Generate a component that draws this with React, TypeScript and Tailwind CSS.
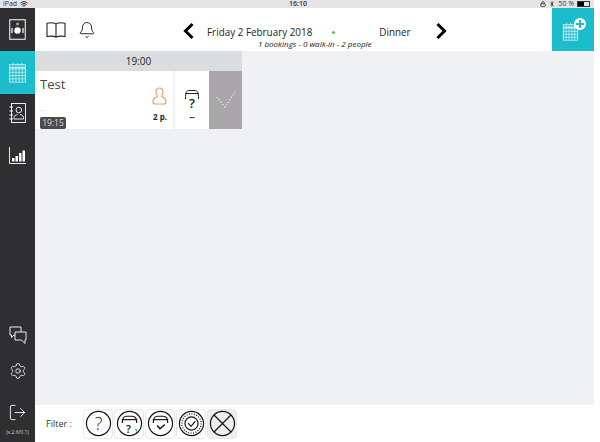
import React from 'react';
import { Bell, Settings, LogOut, Wifi, Bluetooth, Lock } from 'lucide-react';

const sans = { fontFamily: '"Open Sans", sans-serif' };

// --- Icons ---

const CalendarIcon: React.FC<{ className?: string }> = ({ className }) => {
    const lines = [];
    for (let i = 0; i < 6; i++) lines.push(<path key={`v${i}`} d={`M${3 + i * 3.6} 4V24`} />);
    for (let i = 0; i < 4; i++) lines.push(<path key={`h${i}`} d={`M3 ${9 + i * 3.75}H21`} />);
    return (
        <svg className={className} viewBox="0 0 24 26" fill="none" stroke="currentColor" strokeWidth="0.9">
            <rect x="3" y="4" width="18" height="20" />
            <path d="M3 7.5H21" strokeWidth="1.6" />
            <path d="M7 2V5M12 2V5M17 2V5" />
            {lines}
        </svg>
    );
};

const Chevron: React.FC<{ right?: boolean }> = ({ right }) => (
    <svg className="w-[28px] h-[28px] text-black mt-[3px] shrink-0" viewBox="0 0 28 28" fill="none" stroke="currentColor" strokeWidth="3">
        <path d={right ? 'M10.500 7L17.500 14L10.500 21' : 'M17.500 7L10.500 14L17.500 21'} />
    </svg>
);

const TableBase: React.FC = () => (
    <>
        <path d="M6.5 13.5C6.5 8 8 6.5 11 6.5H17C20 6.5 21.5 8 21.5 13.5" />
        <path d="M6 10H22" />
    </>
);

const FilterButton: React.FC<{ active?: boolean; children: React.ReactNode }> = ({ active, children }) => (
    <div className={`w-[30px] h-[30px] rounded-sm border border-[#e8e8ea] flex items-center justify-center ${active ? 'bg-[#eeeeef]' : 'bg-white'}`}>
        <svg className="w-[27px] h-[27px] text-[#111]" viewBox="0 0 28 28" fill="none" stroke="currentColor" strokeWidth="1.2">
            {children}
        </svg>
    </div>
);

const Sidebar: React.FC = () => (
    <div className="w-[35px] bg-[#2f2e30] flex flex-col text-white shrink-0">
        <div className="h-[43px] flex items-center justify-center">
            <svg className="w-[17px] h-[21px]" viewBox="0 0 17 21" fill="none" stroke="currentColor">
                <rect x="0.75" y="0.75" width="15.5" height="19.5" strokeWidth="1" />
                <circle cx="8.5" cy="5" r="1" strokeWidth="0.7" />
                <circle cx="8.5" cy="11.5" r="3.2" fill="currentColor" stroke="none" />
                <path d="M3 9V14M14 9V14" strokeWidth="1.2" />
            </svg>
        </div>
        <div className="h-[43px] bg-[#1dbccd] flex items-center justify-center">
            <CalendarIcon className="w-[21px] h-[23px] text-[#c9f1f5]" />
        </div>
        <div className="h-[38px] flex items-center justify-center">
            <svg className="w-[17px] h-[20px]" viewBox="0 0 17 20" fill="none" stroke="currentColor" strokeWidth="0.9">
                <rect x="2.5" y="0.5" width="14" height="19" />
                <circle cx="9.8" cy="7" r="2.8" />
                <path d="M5 16V14.5C5 12.5 7 12 8.5 11.5M14.5 16V14.5C14.5 12.5 12.5 12 11 11.5M5 16H14.5" />
                <path d="M0.5 4H4M0.5 8H4M0.5 12H4M0.5 16H4" strokeWidth="1.1" />
            </svg>
        </div>
        <div className="h-[46px] flex items-center justify-center">
            <svg className="w-[17px] h-[17px]" viewBox="0 0 17 17">
                <path d="M0.5 0V16.5H17" fill="none" stroke="currentColor" strokeWidth="0.9" />
                <path d="M3 11H5.5V14.5H3ZM6.5 9H9V14.5H6.5ZM10 6H12.5V14.5H10ZM13.5 3.5H16V14.5H13.5Z" fill="currentColor" />
            </svg>
        </div>
        <div className="flex-1" />
        <div className="flex flex-col items-center">
            <svg className="w-[18px] h-[18px] mb-[18px]" viewBox="0 0 18 18" fill="none" stroke="currentColor" strokeWidth="0.9">
                <path d="M1 1H12V9H5L2.5 11.5V9H1Z" />
                <path d="M6 6H17V14H16V17.5L12.5 14H6Z" fill="#2f2e30" />
            </svg>
            <Settings className="w-[18px] h-[18px] mb-[23px]" strokeWidth={1.1} />
            <LogOut className="w-[19px] h-[19px] mb-[7px]" strokeWidth={1.1} />
            <span className="text-[5px] leading-[6px] mb-[7px] text-[#ddd]" style={sans}>(v.2.6/0.1)</span>
        </div>
    </div>
);

const Header: React.FC = () => (
    <div className="h-[43px] bg-white flex items-center shrink-0">
        <svg className="w-[20px] h-[16px] ml-[11px] text-[#222] shrink-0" viewBox="0 0 20 16" fill="none" stroke="currentColor" strokeWidth="1.1">
            <path d="M10 2C8 0.800 3 0.800 1 1.200V14.500C3 14.200 8 14.200 10 15C12 14.200 17 14.200 19 14.500V1.200C17 0.800 12 0.800 10 2ZM10 2V15" />
        </svg>
        <Bell className="w-[18px] h-[18px] ml-[12px] text-[#111] shrink-0" strokeWidth={1.2} />
        <div className="ml-[79px]"><Chevron /></div>
        <div className="w-[224px] self-start mt-[17px] flex flex-col items-start">
            <div className="flex items-center text-[9.9px] leading-[14px] text-[#222] ml-[4px]">
                <span>Friday 2 February 2018</span>
                <span className="w-[3px] h-[3px] rounded-full bg-[#4cc84c] ml-[20px]" />
                <span className="ml-[44px]">Dinner</span>
            </div>
            <div className="text-[8px] leading-[9px] italic text-[#222] ml-[55px]">1 bookings - 0 walk-in - 2 people</div>
        </div>
        <Chevron right />
        <div className="flex-1" />
        <div className="w-[42px] h-[43px] bg-[#1dbccd] flex items-center justify-center relative">
            <CalendarIcon className="w-[19px] h-[21px] text-[#d5f4f7] mt-[4px] -ml-[5px]" />
            <div className="absolute top-[10px] right-[8px] w-[12px] h-[12px] rounded-full bg-white flex items-center justify-center">
                <svg className="w-[8px] h-[8px] text-[#1dbccd]" viewBox="0 0 8 8" stroke="currentColor" strokeWidth="2">
                    <path d="M4 0V8M0 4H8" />
                </svg>
            </div>
        </div>
    </div>
);

const Booking: React.FC = () => (
    <div className="w-[207px]">
        <div className="h-[20px] bg-[#d9dde0] flex items-center justify-center text-[10px] text-[#222]">19:00</div>
        <div className="h-[58px] flex">
            <div className="w-[138px] bg-white relative">
                <div className="absolute left-[5px] top-[4px] text-[13px] leading-[18px] text-[#444]">Test</div>
                <div className="absolute left-[5px] top-[35px] text-[6px] leading-[6px] text-[#aaa]">...</div>
                <div className="absolute left-[5px] bottom-[0px] w-[26px] h-[12px] rounded-[2px] bg-[#4a4a4c] text-[#ddd] text-[8.5px] leading-[12px] text-center">19:15</div>
                <svg className="absolute left-[117px] top-[16px] w-[15px] h-[18px] text-[#e0a26c]" viewBox="0 0 15 18" fill="none" stroke="currentColor" strokeWidth="1.2">
                    <path d="M7.5 1C5 1 4 3 4 5C4 7 5 8.5 5.5 9.5C3 10.5 1 11.5 1 14.5C1 16 2 17 3 17H12C13 17 14 16 14 14.5C14 11.5 12 10.5 9.500 9.500C10 8.500 11 7 11 5C11 3 10 1 7.500 1Z" />
                </svg>
                <div className="absolute right-[6px] top-[40px] text-[8px] leading-[11px] font-bold text-[#222]">2 p.</div>
            </div>
            <div className="w-[34px] ml-[2px] bg-white flex flex-col items-center">
                <svg className="w-[16px] h-[12px] mt-[18px] text-[#222]" viewBox="0 0 16 12" fill="none" stroke="currentColor" strokeWidth="1">
                    <path d="M1.500 10C1.500 3 3 1.500 5 1.500H11C13 1.500 14.500 3 14.500 10" />
                    <path d="M1 4.500H15" />
                </svg>
                <div className="text-[13px] leading-[12px] font-semibold text-[#222] -mt-[4px]">?</div>
                <div className="text-[8px] leading-[8px] font-bold text-[#222] mt-[4px]">--</div>
            </div>
            <div className="w-[33px] bg-[#a9a7a9] flex items-center justify-center">
                <svg className="w-[20px] h-[18px] text-white" viewBox="0 0 20 18" fill="none" stroke="currentColor" strokeWidth="1.200" strokeDasharray="1 2">
                    <path d="M1 6L9 16L19 1" />
                </svg>
            </div>
        </div>
    </div>
);

const Footer: React.FC = () => (
    <div className="h-[37px] bg-white flex items-center shrink-0">
        <span className="text-[9px] text-[#333] ml-[11px] w-[37px] mt-[1px]">Filter :</span>
        <div className="flex gap-[1px]">
            <FilterButton>
                <circle cx="14" cy="14" r="12.500" />
                <text x="14" y="20.500" textAnchor="middle" fontSize="19" fill="#222" stroke="none" fontFamily="Open Sans" fontWeight="300">?</text>
            </FilterButton>
            <FilterButton>
                <circle cx="14" cy="14" r="12.500" />
                <TableBase />
                <text x="13" y="24" textAnchor="middle" fontSize="11" fontWeight="600" fill="currentColor" stroke="none" fontFamily="Open Sans">?</text>
                <text x="21" y="24" textAnchor="middle" fontSize="6" fill="currentColor" stroke="none" fontFamily="Open Sans">1</text>
            </FilterButton>
            <FilterButton>
                <circle cx="14" cy="14" r="12.500" />
                <TableBase />
                <path d="M10.500 16L13.500 19.500L18.500 15" strokeWidth="1.500" />
            </FilterButton>
            <FilterButton>
                <circle cx="14" cy="14" r="12.500" />
                <circle cx="14" cy="14" r="10" strokeDasharray="1 1.600" strokeWidth="1.300" />
                <circle cx="14" cy="14" r="6.800" />
                <path d="M10.500 13.500L13.500 17L18 11.500" />
            </FilterButton>
            <FilterButton active>
                <circle cx="14" cy="14" r="12.500" />
                <path d="M5.200 5.200L22.800 22.800M22.800 5.200L5.200 22.800" />
            </FilterButton>
        </div>
    </div>
);

const StatusBar: React.FC = () => (
    <div className="h-[8px] w-[594px] bg-[#e6e4e6] flex items-center text-[7px] leading-[8px] text-[#333] shrink-0 overflow-hidden">
        <div className="w-[289px] flex items-center pl-[3px] gap-[3px]">
            <span>iPad</span>
            <Wifi className="w-[8px] h-[8px]" strokeWidth={3} />
        </div>
        <span className="font-semibold">16:10</span>
        <div className="ml-auto mr-[4px] flex items-center gap-[3px]">
            <Lock className="w-[6px] h-[6px]" strokeWidth={3} />
            <Bluetooth className="w-[6px] h-[6px]" strokeWidth={3} />
            <span>50 %</span>
            <span className="w-[13px] h-[6px] border border-[#333] block">
                <span className="w-[6px] h-full bg-black block" />
            </span>
        </div>
    </div>
);

export default function App() {
    return (
        <div className="w-[600px] h-[442px] bg-white flex flex-col overflow-hidden" style={sans}>
            <StatusBar />
            <div className="flex-1 flex w-[594px] min-h-0">
                <Sidebar />
                <div className="flex-1 flex flex-col min-w-0">
                    <Header />
                    <div className="flex-1 bg-[#f0f1f4]">
                        <Booking />
                    </div>
                    <Footer />
                </div>
            </div>
        </div>
    );
}
